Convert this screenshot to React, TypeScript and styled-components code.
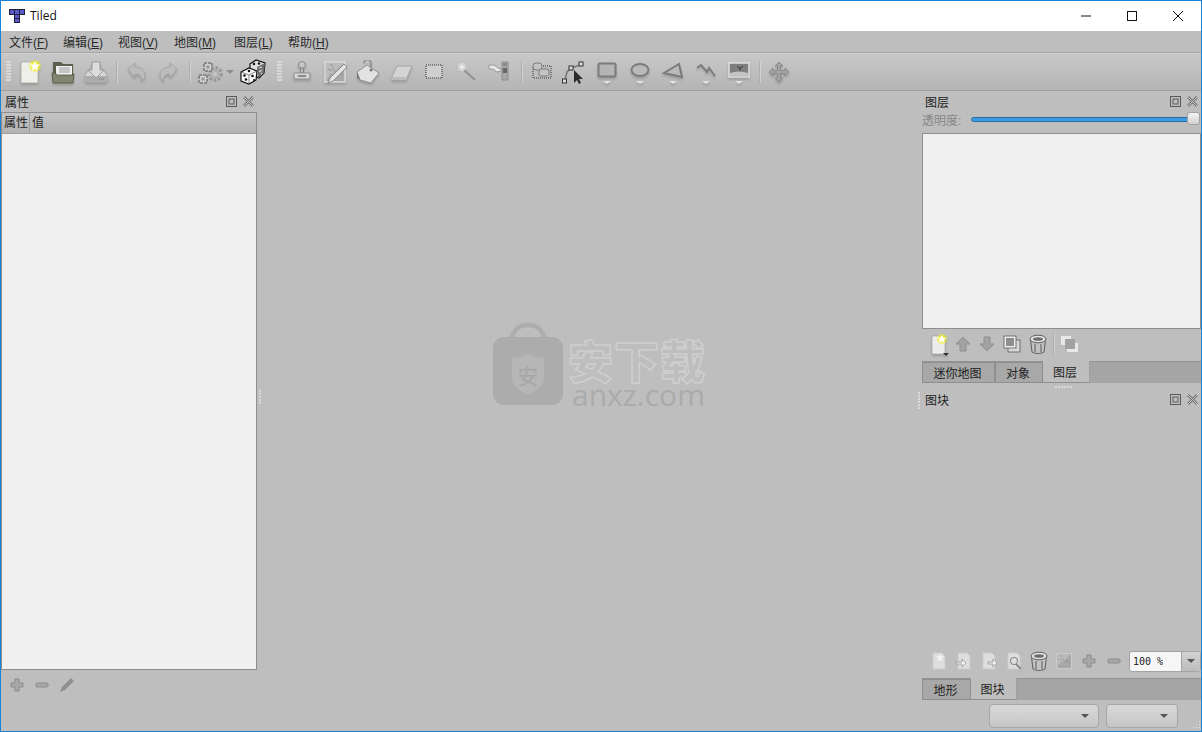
import React from 'react'
import styled, { createGlobalStyle } from 'styled-components'

const CJK = `"Liberation Sans", "Noto Sans CJK SC", sans-serif`

const GlobalStyle = createGlobalStyle`
  html, body { margin: 0; padding: 0; background: #bebebe; overflow: hidden; }
  * { box-sizing: border-box; }
`

const Window = styled.div`
  width: 1202px;
  height: 732px;
  border: 1px solid #1883d7;
  display: flex;
  flex-direction: column;
  background: #bebebe;
  font: 12px ${CJK};
  color: #222;
  position: relative;
`

const TitleBar = styled.div`
  height: 30px;
  flex: none;
  background: #fff;
  display: flex;
  align-items: center;
  padding-left: 8px;
`
const TitleText = styled.span`
  margin: -2px 0 0 5px;
  font: 12px "Open Sans", sans-serif;
  color: #111;
  flex: 1;
`
const WinButton = styled.div`
  width: 46px;
  height: 30px;
  display: flex;
  align-items: center;
  justify-content: center;
`

const MenuBar = styled.div`
  height: 22px;
  flex: none;
  display: flex;
  align-items: center;
  padding-left: 8px;
  background: #bebebe;
  border-bottom: 1px solid #a6a6a6;
  color: #2a2a2a;
`
const MenuItem = styled.span<{ $w: number }>`
  width: ${p => p.$w}px;
  white-space: nowrap;
  & u { text-underline-offset: 1px; }
`

const ToolBar = styled.div`
  height: 38px;
  flex: none;
  display: flex;
  align-items: center;
  padding-left: 5px;
  background: linear-gradient(#c8c8c8, #b5b5b5);
  border-bottom: 1px solid #a0a0a0;
  box-shadow: inset 0 1px 0 #cfcfcf;
`
const Grip = styled.div<{ $ml?: number; $mr?: number }>`
  width: 5px;
  height: 21px;
  flex: none;
  margin-left: ${p => p.$ml ?? 0}px;
  margin-right: ${p => p.$mr ?? 0}px;
  background-image: radial-gradient(circle at 1px 1px, #d8d8d8 1px, transparent 1px);
  background-size: 2px 3px;
`
const Tool = styled.div<{ $w?: number }>`
  width: ${p => p.$w ?? 33}px;
  flex: none;
  display: flex;
  align-items: center;
  justify-content: center;
`
const Sep = styled.div<{ $w?: number }>`
  width: ${p => p.$w ?? 10}px;
  height: 22px;
  flex: none;
  position: relative;
  &::after {
    content: '';
    position: absolute;
    left: 50%;
    top: 0;
    bottom: 0;
    width: 1px;
    background: #d2d2d2;
    box-shadow: -1px 0 0 #adadad;
  }
`

const Body = styled.div`
  flex: 1;
  min-height: 0;
  display: flex;
`
const LeftDock = styled.div`
  width: 256px;
  flex: none;
  display: flex;
  flex-direction: column;
  padding-bottom: 31px;
`
const Centre = styled.div`
  flex: 1;
  position: relative;
`
const RightDock = styled.div`
  width: 279px;
  flex: none;
  display: flex;
  flex-direction: column;
`

const DockTitle = styled.div<{ $pl?: number; $pb?: number }>`
  height: 21px;
  flex: none;
  display: flex;
  align-items: center;
  justify-content: space-between;
  padding: 0 3px ${p => p.$pb ?? 0}px ${p => p.$pl ?? 4}px;
  color: #222;
  position: relative;
`
const DockButtons = styled.div`
  display: flex;
  gap: 6px;
  align-items: center;
`

const Table = styled.div`
  flex: 1;
  border: 1px solid #8e8e8e;
  background: #f0f0f0;
  display: flex;
  flex-direction: column;
`
const TableHead = styled.div`
  height: 21px;
  display: flex;
  background: linear-gradient(#c4c4c4, #b2b2b2);
  border-bottom: 1px solid #a0a0a0;
`
const HeadCell = styled.div<{ $w?: number }>`
  width: ${p => (p.$w ? `${p.$w}px` : 'auto')};
  flex: ${p => (p.$w ? 'none' : 1)};
  padding-left: 2px;
  line-height: 21px;
  border-right: ${p => (p.$w ? '1px solid #9a9a9a' : 'none')};
`

const IconRow = styled.div<{ $h: number; $pl: number; $pb?: number }>`
  height: ${p => p.$h}px;
  flex: none;
  display: flex;
  align-items: center;
  padding-left: ${p => p.$pl}px;
  padding-bottom: ${p => p.$pb ?? 0}px;
`
const SmallTool = styled.div<{ $w?: number }>`
  width: ${p => p.$w ?? 25}px;
  flex: none;
  display: flex;
  justify-content: center;
  align-items: center;
`

const SliderRow = styled.div`
  height: 21px;
  flex: none;
  display: flex;
  align-items: center;
  color: #868686;
  margin: -3px 0 3px;
`
const SliderLabel = styled.span`
  width: 49px;
  flex: none;
  white-space: nowrap;
`
const Groove = styled.div`
  width: 228px;
  height: 5px;
  border-radius: 3px;
  border: 1px solid #2b6ea5;
  background: #3a9be0;
  position: relative;
`
const Handle = styled.div`
  position: absolute;
  right: -2px;
  top: -6px;
  width: 13px;
  height: 13px;
  border-radius: 3px;
  border: 1px solid #a2a2a2;
  background: linear-gradient(#f4f4f4, #d2d2d2);
`

const ListBox = styled.div`
  height: 196px;
  flex: none;
  background: #f0f0f0;
  border: 1px solid #8e8e8e;
`

const TabBar = styled.div`
  height: 22px;
  flex: none;
  display: flex;
  background: #a5a5a5;
  border-top: 1px solid #939393;
`
const Tab = styled.div<{ $w: number; $on?: boolean }>`
  width: ${p => p.$w}px;
  margin-top: ${p => (p.$on ? -1 : 0)}px;
  padding-right: 2px;
  display: flex;
  align-items: center;
  justify-content: center;
  background: ${p => (p.$on ? '#bebebe' : '#a8a8a8')};
  border: 1px solid #8f8f8f;
  border-top: ${p => (p.$on ? 'none' : '')};
  border-right-color: ${p => (p.$on ? '#a0a0a0' : '#8f8f8f')};
  border-left: ${p => (p.$on ? 'none' : '')};
  color: #222;
`

const Splitter = styled.div`
  height: 7px;
  flex: none;
  display: flex;
  justify-content: center;
  align-items: center;
  padding-left: 4px;
  &::after {
    content: '';
    width: 18px;
    height: 2px;
    background-image: radial-gradient(circle at 1px 1px, #d8d8d8 1px, transparent 1px);
    background-size: 3px 2px;
  }
`
const VGrip = styled.div`
  position: absolute;
  left: -4px;
  top: 2px;
  width: 3px;
  height: 17px;
  background-image: radial-gradient(circle at 1px 1px, #dcdcdc 1px, transparent 1px);
  background-size: 3px 3px;
`
const SideGrip = styled.div`
  position: absolute;
  left: 2px;
  top: 299px;
  width: 3px;
  height: 15px;
  background-image: radial-gradient(circle at 1px 1px, #d8d8d8 1px, transparent 1px);
  background-size: 3px 3px;
`

const Spacer = styled.div`
  flex: 1;
`

const ZoomBox = styled.div`
  width: 72px;
  height: 21px;
  margin-left: 3px;
  flex: none;
  border: 1px solid #a4a4a4;
  border-radius: 3px;
  background: #f6f6f6;
  display: flex;
  font: 10px "DejaVu Sans Mono", monospace;
  color: #222;
`
const ZoomText = styled.span`
  flex: 1;
  padding-left: 3px;
  line-height: 19px;
`
const ZoomArrow = styled.span`
  width: 19px;
  background: linear-gradient(#d2d2d2, #bcbcbc);
  border-left: 1px solid #a4a4a4;
  display: flex;
  align-items: center;
  justify-content: center;
`
const Caret = styled.i`
  width: 0;
  height: 0;
  border: 4px solid transparent;
  border-top: 4px solid #555;
  border-bottom: none;
  display: block;
`
const PaleCaret = styled(Caret)`
  border-top-color: #8c8c8c;
`

const ComboRow = styled.div`
  height: 31px;
  flex: none;
  display: flex;
  align-items: center;
  padding-left: 67px;
  gap: 7px;
`
const Combo = styled.div<{ $w: number }>`
  width: ${p => p.$w}px;
  height: 24px;
  border: 1px solid #a6a6a6;
  border-radius: 4px;
  background: linear-gradient(#d8d8d8, #c6c6c6);
  display: flex;
  align-items: center;
  justify-content: flex-end;
  padding-right: 9px;
`
const SizeGrip = styled.svg`
  position: absolute;
  right: 0;
  bottom: 0;
`

const Watermark = styled.div`
  position: absolute;
  left: 235px;
  top: 231px;
  width: 216px;
  height: 84px;
  display: flex;
  gap: 5px;
  pointer-events: none;
`
const MarkWords = styled.div`
  display: flex;
  flex-direction: column;
`
const MarkCn = styled.div`
  font: 900 45px/46px "Noto Sans CJK SC", sans-serif;
  letter-spacing: 1px;
  margin-top: 15px;
  color: #bebebe;
  -webkit-text-stroke: 1.5px #cfcfcf;
  white-space: nowrap;
`
const MarkEn = styled.div`
  font: 30px/24px "Open Sans", sans-serif;
  color: #ababab;
  margin-left: 4px;
  white-space: nowrap;
`

const Svg = ({ s = 24, w, h, children, f }: { s?: number; w?: number; h?: number; f?: boolean; children: React.ReactNode }) => (
  <svg
    width={w ?? s}
    height={h ?? s}
    viewBox={`0 0 ${w ?? s} ${h ?? s}`}
    style={f ? { filter: 'drop-shadow(0 2px 1px rgba(0,0,0,.16))' } : undefined}
  >
    {children}
  </svg>
)

const TiledLogo = () => (
  <Svg w={16} h={16}>
    <path d="M0 1h16v6h-5v8H5V7H0z" fill="#1c1c3a" />
    <path d="M1 2h4v4H1zM6 2h4v4H6zM11 2h4v4h-4zM6 7h4v3H6zM6 11h4v3H6z" fill="#5c5cc8" />
  </Svg>
)

const NewIcon = ({ small }: { small?: boolean }) => (
  <Svg f>
    <defs>
      <radialGradient id={small ? 'glow2' : 'glow'}>
        <stop offset="0.4" stopColor="#f2f21a" />
        <stop offset="1" stopColor="#f2f21a" stopOpacity="0" />
      </radialGradient>
    </defs>
    {small ? (
      <>
        <path d="M5 4h13v18H5z" fill="#ececec" stroke="#9b9b9b" strokeWidth=".6" />
        <circle cx="15" cy="7" r="6" fill="url(#glow2)" />
        <path d="M15 3l1.2 2.6 2.8.3-2 2 .5 2.8-2.5-1.4-2.5 1.4.5-2.8-2-2 2.8-.3z" fill="#fff" />
        <path d="M16 21h6l-3 3z" fill="#333" />
      </>
    ) : (
      <>
        <path d="M3 2h17v21H3z" fill="#eeeeea" stroke="#a5a59b" strokeWidth=".7" />
        <circle cx="17" cy="6" r="7" fill="url(#glow)" />
        <path d="M17 1l1.5 3.2 3.5.4-2.6 2.4.7 3.5-3.1-1.8-3.1 1.8.7-3.5L12 4.600l3.500-.4z" fill="#fff" />
      </>
    )}
  </Svg>
)
const OpenIcon = () => (
  <Svg f>
    <path d="M2 2h8l2 2h10v19H2z" fill="#5c5e4e" />
    <path d="M5 6h16v10H5z" fill="#f0f0f0" />
    <path d="M8 8h11M8 10h11M8 12h11" stroke="#9a9a9a" />
    <path d="M1 13h4v2h17v-1h1l-1 9H2z" fill="#84876f" stroke="#50523f" strokeWidth=".8" />
  </Svg>
)
const SaveIcon = () => (
  <Svg f>
    <path d="M1 15l4-6h14l4 6v7H1z" fill="#d6d6d6" stroke="#a4a4a4" />
    <path d="M1.500 16h21v5.500h-21z" fill="#aaaaaa" />
    <path d="M8 2h8v8h4l-8 8-8-8h4z" fill="#dcdcdc" stroke="#9a9a9a" />
    <path d="M15 19h6" stroke="#777" strokeDasharray="1 1" />
  </Svg>
)
const UndoIcon = ({ flip }: { flip?: boolean }) => (
  <Svg f>
    <g transform={flip ? 'translate(24 0) scale(-1 1)' : undefined}>
      <path d="M3 9l7-6v4c6 0 10 3 10 8 0 3-2 5-4 6 1-2 1-7-6-7v4z" fill="#bcbcbc" stroke="#a4a4a4" />
    </g>
  </Svg>
)
const GearsIcon = () => (
  <Svg w={28} h={24}>
    <circle cx="19" cy="14" r="6" fill="none" stroke="#9a9a9a" strokeWidth="4" strokeDasharray="2.500 1.500" />
    <circle cx="19" cy="14" r="4.500" fill="#b0b0b0" />
    <circle cx="19" cy="14" r="2" fill="#c8c8c8" />
    <rect x="8" y="3" width="8" height="8" fill="#cfcfcf" stroke="#8a8a8a" strokeWidth="2" strokeDasharray="3 1" />
    <rect x="10.500" y="5.500" width="3" height="3" fill="#969696" />
    <rect x="3" y="15" width="8" height="8" fill="#cfcfcf" stroke="#8a8a8a" strokeWidth="2" strokeDasharray="3 1" />
    <rect x="5.500" y="17.500" width="3" height="3" fill="#969696" />
  </Svg>
)
const DiceIcon = () => (
  <Svg w={26} h={26}>
    <path d="M10 5l6-4 9 3-1 10-5 5-9-4z" fill="#dedede" stroke="#111" strokeWidth="1.200" />
    <path d="M17 8l8-4-1 10-6 5z" fill="#6e6e6e" />
    <path d="M19 9l3-1M19 13l3-2M21 15l1-1" stroke="#d8d8d8" strokeWidth="1.300" />
    <circle cx="14" cy="5" r="1.200" fill="#111" /><circle cx="19" cy="4.500" r="1.200" fill="#111" />
    <path d="M1 13l8-4 8 3-1 9-7 4-8-3z" fill="#f8f8f8" stroke="#111" strokeWidth="1.200" />
    <circle cx="9" cy="12" r="1.300" fill="#111" />
    <circle cx="4.500" cy="16.500" r="1.300" fill="#111" /><circle cx="6" cy="20.500" r="1.300" fill="#111" />
    <circle cx="12.500" cy="17" r="1.300" fill="#111" /><circle cx="14" cy="21" r="1" fill="#111" />
    <path d="M9 16l8-4M9 16L1 13M9 16v9" stroke="#555" strokeWidth=".7" />
  </Svg>
)
const StampIcon = () => (
  <Svg f>
    <circle cx="12" cy="5" r="3.500" fill="#c6c6c6" stroke="#868686" />
    <path d="M10.500 8h3v5h-3z" fill="#b8b8b8" stroke="#868686" />
    <path d="M4 13h16v6H4z" fill="#d4d4d4" stroke="#8f8f8f" />
    <path d="M8 16h8" stroke="#6b6b6b" strokeWidth="1.400" />
  </Svg>
)
const TerrainIcon = ({ small }: { small?: boolean }) => (
  <Svg f={!small} s={small ? 18 : 24}>
    <g transform={small ? 'scale(.75)' : undefined}>
      <path d="M2 2h20v20H2z" fill="#a8a8a8" stroke={small ? '#cacaca' : '#dcdcdc'} strokeWidth="1.500" />
      <path d="M3 3h18l-6 5-3 4-5 2-4 7z" fill="#bcbcbc" />
      <path d="M10 8l3 5 4-2 3 5M5 9l4 2M8 4l2 3" stroke="#929292" fill="none" />
      {!small && <path d="M5 23l2-5L21 4l3 3L10 21z" fill="#e2e2e2" stroke="#8c8c8c" />}
    </g>
  </Svg>
)
const BucketIcon = () => (
  <Svg f>
    <path d="M8 3a3.500 3.500 0 017 0v7" fill="none" stroke="#8a8a8a" strokeWidth="1.500" />
    <path d="M1 12l10-7 12 8-8 10-11-3z" fill="#e2e2e2" stroke="#8f8f8f" />
    <path d="M1 12l3 8-3-2z" fill="#777" />
    <circle cx="15" cy="10" r="1.500" fill="#777" />
  </Svg>
)
const EraserIcon = () => (
  <Svg f>
    <path d="M2 19l6-13h15l-6 14H3z" fill="#d4d4d4" stroke="#a6a6a6" />
    <path d="M2 19l1 1h14l1-3H3z" fill="#bcbcbc" />
  </Svg>
)
const RectSelectIcon = () => (
  <Svg>
    <rect x="4" y="5" width="16" height="13" fill="#cfcfcf" stroke="#333" strokeDasharray="1 1" />
  </Svg>
)
const WandIcon = () => (
  <Svg>
    <path d="M9 10l11 10" stroke="#929292" strokeWidth="2" />
    <circle cx="7" cy="7" r="4" fill="#e4e4e4" opacity=".6" />
    <circle cx="7" cy="7" r="1.500" fill="#f6f6f6" />
  </Svg>
)
const PickerIcon = () => (
  <Svg>
    <path d="M14 2h6v18h-6z" fill="#a8a8a8" stroke="#8c8c8c" />
    <path d="M15 8h4v5h-4z" fill="#666" /><path d="M15 3h4v3h-4z" fill="#8a8a8a" />
    <path d="M1 5h5l4 3 3 1v2l-4 1-4-3H1z" fill="#e8e8e8" stroke="#9a9a9a" />
  </Svg>
)
const ObjSelectIcon = () => (
  <Svg>
    <rect x="3" y="6" width="18" height="12" fill="none" stroke="#333" strokeDasharray="1 1" />
    <rect x="3" y="3" width="9" height="7" rx="3" fill="#c4c4c4" stroke="#7b7b7b" />
    <rect x="9" y="9" width="10" height="7" rx="2" fill="#c4c4c4" stroke="#7b7b7b" />
  </Svg>
)
const NodeIcon = () => (
  <Svg w={26} h={26}>
    <path d="M5 21l2-8 4-4 9-3" fill="none" stroke="#777" strokeWidth="1.500" />
    <rect x="2.500" y="20" width="4" height="4" fill="#ddd" stroke="#333" />
    <rect x="9" y="7" width="4" height="4" fill="#ddd" stroke="#333" />
    <rect x="19" y="3" width="4" height="4" fill="#ddd" stroke="#333" />
    <path d="M14 11v13l3-3 2 4 2-1-2-4h4z" fill="#2a2a2a" />
  </Svg>
)
const Down = () => <path d="M8 21h8l-4 3z" fill="#e2e2e2" />
const RectIcon = () => (
  <Svg f>
    <Down />
    <rect x="3.500" y="3.500" width="17" height="13" rx="1" fill="#b4b4b4" stroke="#7b7b7b" strokeWidth="2" />
  </Svg>
)
const EllipseIcon = () => (
  <Svg f>
    <Down />
    <ellipse cx="12" cy="10" rx="8.500" ry="6" fill="#bababa" stroke="#7b7b7b" strokeWidth="2" />
  </Svg>
)
const PolygonIcon = () => (
  <Svg f>
    <Down />
    <path d="M3 13L18 4l3 13z" fill="#bababa" stroke="#7b7b7b" strokeWidth="2" />
  </Svg>
)
const PolylineIcon = () => (
  <Svg f>
    <Down />
    <path d="M3 8l4-3 6 7 2-4 6 8" fill="none" stroke="#7b7b7b" strokeWidth="2" />
  </Svg>
)
const ImageIcon = () => (
  <Svg f>
    <Down />
    <rect x="2" y="3" width="20" height="14" fill="#7e7e7e" stroke="#e2e2e2" strokeWidth="1.500" />
    <path d="M3 13c6-2 12-2 18 0v3H3z" fill="#c4c4c4" />
    <path d="M13 11V7m0 2l-3-3m3 2l3-2" stroke="#3f3f3f" />
  </Svg>
)
const MoveIcon = () => (
  <Svg f>
    <path d="M12 2l4 4h-2.500v4.500H18V8l4 4-4 4v-2.500h-4.500V18H16l-4 4-4-4h2.500v-4.500H6V16l-4-4 4-4v2.500h4.500V6H8z" fill="#a2a2a2" stroke="#8a8a8a" />
  </Svg>
)
const FloatIcon = () => (
  <Svg s={11}>
    <rect x=".5" y=".5" width="10" height="10" fill="none" stroke="#5a5a5a" />
    <rect x="3" y="3" width="5" height="5" fill="none" stroke="#5a5a5a" />
  </Svg>
)
const CloseIcon = () => (
  <Svg s={11}>
    <path d="M1 1l9 9M10 1l-9 9" stroke="#707070" strokeWidth="2.500" />
    <path d="M1 1l9 9M10 1l-9 9" stroke="#cdcdcd" strokeWidth="1" />
  </Svg>
)
const PlusIcon = () => (
  <Svg s={14}>
    <path d="M5 1h4v4h4v4H9v4H5V9H1V5h4z" fill="#a8a8a8" stroke="#8c8c8c" />
  </Svg>
)
const MinusIcon = () => (
  <Svg s={14}>
    <rect x="1" y="5" width="12" height="4" rx="1" fill="#a8a8a8" stroke="#8c8c8c" />
  </Svg>
)
const PencilIcon = () => (
  <Svg s={14}>
    <path d="M0 14l2-5L11 0l3 3-9 9z" fill="#8f8f8f" />
  </Svg>
)
const ArrowIcon = ({ down }: { down?: boolean }) => (
  <Svg s={18}>
    <path
      d={down ? 'M6 2h6v7h4l-7 7-7-7h4z' : 'M6 16h6V9h4L9 2 2 9h4z'}
      fill="#a2a2a2"
      stroke="#8f8f8f"
    />
  </Svg>
)
const DupIcon = () => (
  <Svg s={18}>
    <rect x="5" y="5" width="12" height="12" fill="#d8d8d8" stroke="#707070" />
    <rect x="1" y="1" width="12" height="12" fill="#efefef" stroke="#707070" />
    <path d="M3 3h8v8H3z" fill="#8e8e8e" />
  </Svg>
)
const TrashIcon = () => (
  <Svg s={20}>
    <path d="M2.500 6l1.500 12c4 2 8 2 12 0l1.500-12z" fill="#c2c2c2" stroke="#5e5e5e" />
    <ellipse cx="10" cy="5" rx="8" ry="3.800" fill="#e2e2e2" stroke="#5e5e5e" />
    <ellipse cx="10" cy="5" rx="5" ry="1.800" fill="#6e6e6e" />
    <path d="M7 10v8M13 10v8" stroke="#7e7e7e" strokeWidth="1.500" />
  </Svg>
)
const StackIcon = () => (
  <Svg s={18}>
    <rect x="1" y="1" width="10" height="9" fill="#e8e8e8" />
    <rect x="7" y="8" width="11" height="9" fill="#e8e8e8" />
    <rect x="5" y="4" width="10" height="10" fill="#a2a2a2" />
  </Svg>
)
const PageIcon = ({ mark }: { mark?: 'star' | 'in' | 'out' | 'key' }) => (
  <Svg s={18}>
    <path d="M3 1h9l3 3v13H3z" fill="#dedede" stroke="#cacaca" />
    {mark === 'star' && <path d="M10 1l1 3 3 .4-2.200 2 .6 3L10 8l-2.400 1.400.6-3L6 4.400 9 4z" fill="#f2f2f2" />}
    {mark === 'in' && <path d="M1 10h6V7l4 4-4 4v-3H1z" fill="#f0f0f0" stroke="#8c8c8c" strokeWidth=".7" />}
    {mark === 'out' && <path d="M8 10h5V7l4 4-4 4v-3H8z" fill="#f0f0f0" stroke="#8c8c8c" strokeWidth=".7" />}
    {mark === 'key' && (
      <>
        <circle cx="9" cy="9" r="3.500" fill="none" stroke="#8c8c8c" strokeWidth="1.200" />
        <path d="M11 12l5 5" stroke="#8c8c8c" strokeWidth="2" />
      </>
    )}
  </Svg>
)
const ShieldLogo = () => (
  <Svg w={71} h={84}>
    <path d="M19 18C22 6 28 3 36 3s14 3 17 15" fill="none" stroke="#adadad" strokeWidth="4.500" />
    <rect x="1" y="15" width="70" height="68" rx="11" fill="#acacac" />
    <path d="M36 32c7 3 12 4 16 4v19c0 9-8 14-16 18-8-4-16-9-16-18V36c4 0 9-1 16-4z" fill="#b6b6b6" />
    <text x="36" y="62" textAnchor="middle" fontFamily="Noto Sans CJK SC" fontSize="21" fill="#a6a6a6">安</text>
  </Svg>
)

const menus: [string, string, number][] = [
  ['文件', 'F', 54], ['编辑', 'E', 55], ['视图', 'V', 56],
  ['地图', 'M', 60], ['图层', 'L', 54], ['帮助', 'H', 60],
]

export default function App() {
  return (
    <Window>
      <GlobalStyle />
      <TitleBar>
        <TiledLogo />
        <TitleText>Tiled</TitleText>
        <WinButton>
          <Svg s={12}><path d="M1 6h10" stroke="#111" /></Svg>
        </WinButton>
        <WinButton>
          <Svg s={12}><rect x="1.500" y="1.500" width="9" height="9" fill="none" stroke="#111" /></Svg>
        </WinButton>
        <WinButton>
          <Svg s={12}><path d="M1 1l10 10M11 1L1 11" stroke="#111" /></Svg>
        </WinButton>
      </TitleBar>
      <MenuBar>
        {menus.map(([name, key, w]) => (
          <MenuItem key={key} $w={w}>
            {name}(<u>{key}</u>)
          </MenuItem>
        ))}
      </MenuBar>
      <ToolBar>
        <Grip $mr={2} />
        <Tool><NewIcon /></Tool>
        <Tool><OpenIcon /></Tool>
        <Tool><SaveIcon /></Tool>
        <Sep />
        <Tool $w={30}><UndoIcon /></Tool>
        <Tool $w={32}><UndoIcon flip /></Tool>
        <Sep $w={12} />
        <Tool $w={28}><GearsIcon /></Tool>
        <Tool $w={12}><PaleCaret /></Tool>
        <Tool $w={34}><DiceIcon /></Tool>
        <Grip $ml={7} $mr={3} />
        <Tool><StampIcon /></Tool>
        <Tool><TerrainIcon /></Tool>
        <Tool><BucketIcon /></Tool>
        <Tool><EraserIcon /></Tool>
        <Tool><RectSelectIcon /></Tool>
        <Tool><WandIcon /></Tool>
        <Tool><PickerIcon /></Tool>
        <Sep $w={12} />
        <Tool $w={27}><ObjSelectIcon /></Tool>
        <Tool $w={35}><NodeIcon /></Tool>
        <Tool><RectIcon /></Tool>
        <Tool><EllipseIcon /></Tool>
        <Tool><PolygonIcon /></Tool>
        <Tool><PolylineIcon /></Tool>
        <Tool $w={34}><ImageIcon /></Tool>
        <Sep $w={8} />
        <Tool $w={30}><MoveIcon /></Tool>
      </ToolBar>
      <Body>
        <LeftDock>
          <DockTitle>
            属性
            <DockButtons>
              <FloatIcon />
              <CloseIcon />
            </DockButtons>
          </DockTitle>
          <Table>
            <TableHead>
              <HeadCell $w={28}>属性</HeadCell>
              <HeadCell>值</HeadCell>
            </TableHead>
          </Table>
          <IconRow $h={30} $pl={3}>
            <SmallTool><PlusIcon /></SmallTool>
            <SmallTool><MinusIcon /></SmallTool>
            <SmallTool><PencilIcon /></SmallTool>
          </IconRow>
        </LeftDock>
        <Centre>
          <SideGrip />
          <Watermark>
            <ShieldLogo />
            <MarkWords>
              <MarkCn>安下载</MarkCn>
              <MarkEn>anxz.com</MarkEn>
            </MarkWords>
          </Watermark>
        </Centre>
        <RightDock>
          <DockTitle $pl={3}>
            图层
            <DockButtons>
              <FloatIcon />
              <CloseIcon />
            </DockButtons>
          </DockTitle>
          <SliderRow>
            <SliderLabel>透明度:</SliderLabel>
            <Groove>
              <Handle />
            </Groove>
          </SliderRow>
          <ListBox />
          <IconRow $h={32} $pl={5} $pb={2}>
            <SmallTool $w={24}><NewIcon small /></SmallTool>
            <SmallTool $w={24}><ArrowIcon /></SmallTool>
            <SmallTool $w={24}><ArrowIcon down /></SmallTool>
            <SmallTool $w={26}><DupIcon /></SmallTool>
            <SmallTool $w={25}><TrashIcon /></SmallTool>
            <Sep $w={8} />
            <SmallTool $w={22}><StackIcon /></SmallTool>
          </IconRow>
          <TabBar>
            <Tab $w={73}>迷你地图</Tab>
            <Tab $w={48}>对象</Tab>
            <Tab $w={47} $on>图层</Tab>
          </TabBar>
          <Splitter />
          <DockTitle $pl={3} $pb={2}>
            <VGrip />
            图块
            <DockButtons>
              <FloatIcon />
              <CloseIcon />
            </DockButtons>
          </DockTitle>
          <Spacer />
          <IconRow $h={34} $pl={4}>
            <SmallTool><PageIcon mark="star" /></SmallTool>
            <SmallTool><PageIcon mark="in" /></SmallTool>
            <SmallTool><PageIcon mark="out" /></SmallTool>
            <SmallTool><PageIcon mark="key" /></SmallTool>
            <SmallTool><TrashIcon /></SmallTool>
            <SmallTool><TerrainIcon small /></SmallTool>
            <SmallTool><PlusIcon /></SmallTool>
            <SmallTool><MinusIcon /></SmallTool>
            <ZoomBox>
              <ZoomText>100 %</ZoomText>
              <ZoomArrow><Caret /></ZoomArrow>
            </ZoomBox>
          </IconRow>
          <TabBar>
            <Tab $w={49}>地形</Tab>
            <Tab $w={46} $on>图块</Tab>
          </TabBar>
          <ComboRow>
            <Combo $w={110}><Caret /></Combo>
            <Combo $w={72}><Caret /></Combo>
          </ComboRow>
        </RightDock>
      </Body>
      <SizeGrip width="12" height="12" viewBox="0 0 12 12">
        <path d="M10 2h1v1h-1zM7 5h1v1H7zM10 5h1v1h-1zM4 8h1v1H4zM7 8h1v1H7zM10 8h1v1h-1z" fill="#e0e0e0" />
      </SizeGrip>
    </Window>
  )
}
